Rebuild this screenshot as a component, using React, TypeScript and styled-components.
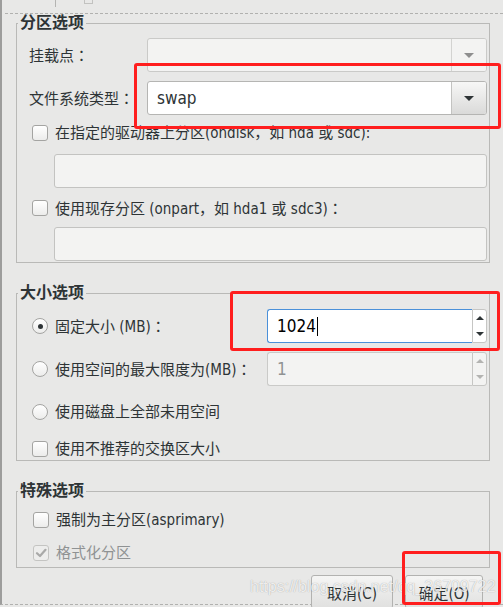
import React from "react";
import styled, { createGlobalStyle } from "styled-components";

const GlobalStyle = createGlobalStyle`
    body {
        margin: 0;
        background: #e8e8e7;
        font-family: "Liberation Sans Narrow", "DejaVu Sans Condensed", "Liberation Sans", "Noto Sans CJK SC", sans-serif;
        color: #2e3436;
    }
`;

const Page = styled.div`
    position: relative;
    width: 503px;
    height: 607px;
    overflow: hidden;
    background: #e8e8e7;
`;

const Frame = styled.div`
    height: 605px;
    box-sizing: border-box;
    border-left: 2px solid #9d9d9c;
    border-bottom: 1px dashed #b1b1af;
`;

const TopStrip = styled.div`
    display: flex;
    height: 13px;
    margin-left: 3px;
    border-bottom: 1px dashed #b1b1af;
`;

const TopTick = styled.div`
    width: 1px;
    height: 7px;
    margin-left: 50px;
    background: #b4b4b2;
`;

const TopMark = styled.div`
    width: 7px;
    height: 3px;
    margin-left: 28px;
    border: 1px solid #c2c2c0;
    border-top: none;
`;

const Group = styled.fieldset<{ $top: number; $bottom: number }>`
    display: block;
    width: 474px;
    box-sizing: border-box;
    margin: ${(p) => p.$top}px 0 0 14px;
    padding: 0 1px ${(p) => p.$bottom}px 1px;
    border: 1px solid #b9b9b7;
    min-inline-size: auto;
`;

const Legend = styled.legend`
    padding: 0 2px;
    font-size: 16px;
    line-height: 18px;
    font-weight: bold;
    color: #2e3436;
`;

const Body = styled.div`
    display: flex;
    flex-direction: column;
    padding: 0 1px 0 11px;
`;

const FormRow = styled.div<{ $label: number; $top: number }>`
    display: grid;
    grid-template-columns: ${(p) => p.$label}px 1fr;
    align-items: center;
    height: 34px;
    margin-top: ${(p) => p.$top}px;
`;

const OptionRow = styled.div<{ $top: number; $indent?: number }>`
    display: flex;
    align-items: center;
    gap: 7px;
    height: 22px;
    margin-top: ${(p) => p.$top}px;
    padding-left: ${(p) => p.$indent ?? 3}px;
`;

const Label = styled.span<{ $disabled?: boolean }>`
    font-size: 15px;
    line-height: 18px;
    white-space: nowrap;
    color: ${(p) => (p.$disabled ? "#8f9293" : "#2e3436")};
`;

// full-width colon drawn centred in its em box, as in the screenshot
const Colon = styled.span`
    font-family: "Noto Sans CJK JP", "Noto Sans CJK TC", sans-serif;
`;

const CheckBox = styled.span<{ $disabled?: boolean }>`
    display: flex;
    align-items: center;
    justify-content: center;
    width: 14px;
    height: 14px;
    flex: none;
    border: 1px solid ${(p) => (p.$disabled ? "#c4c4c2" : "#a4a4a2")};
    border-radius: 3px;
    background: ${(p) => (p.$disabled ? "#ededec" : "linear-gradient(#ffffff, #ececeb)")};
`;

const Radio = styled.span<{ $checked?: boolean }>`
    display: flex;
    align-items: center;
    justify-content: center;
    width: 14px;
    height: 14px;
    flex: none;
    border: 1px solid #a4a4a2;
    border-radius: 50%;
    background: linear-gradient(#ffffff, #ececeb);

    &::after {
        content: "";
        display: ${(p) => (p.$checked ? "block" : "none")};
        width: 5px;
        height: 5px;
        border-radius: 50%;
        background: #2e3436;
    }
`;

const Combo = styled.div<{ $disabled?: boolean }>`
    display: flex;
    height: 34px;
    box-sizing: border-box;
    border: 1px solid ${(p) => (p.$disabled ? "#cacac8" : "#b5b5b3")};
    border-radius: 3px;
    background: ${(p) => (p.$disabled ? "#f3f3f2" : "#ffffff")};
    overflow: hidden;
`;

const ComboText = styled.div`
    flex: 1;
    padding-left: 9px;
    font-size: 17px;
    line-height: 32px;
`;

const ComboButton = styled.div<{ $disabled?: boolean }>`
    display: flex;
    align-items: center;
    justify-content: center;
    width: 34px;
    border-left: 1px solid ${(p) => (p.$disabled ? "#d3d3d1" : "#c3c3c1")};
    background: ${(p) => (p.$disabled ? "#f3f3f2" : "linear-gradient(#f7f7f6, #dadad9)")};
`;

const Arrow = styled.span<{ $up?: boolean; $color: string; $size: number }>`
    width: 0;
    height: 0;
    border-left: ${(p) => p.$size}px solid transparent;
    border-right: ${(p) => p.$size}px solid transparent;
    ${(p) =>
        p.$up
            ? `border-bottom: ${Math.round(p.$size * 0.9)}px solid ${p.$color};`
            : `border-top: ${Math.round(p.$size * 0.9)}px solid ${p.$color};`}
`;

const Entry = styled.div<{ $top: number }>`
    height: 34px;
    margin: ${(p) => p.$top}px 0 0 25px;
    box-sizing: border-box;
    border: 1px solid #c3c3c1;
    border-radius: 3px;
    background: #f3f3f2;
`;

const Spin = styled.div`
    display: flex;
    height: 34px;
`;

const SpinField = styled.div<{ $focused?: boolean }>`
    display: flex;
    align-items: center;
    flex: 1;
    box-sizing: border-box;
    padding-left: 9px;
    border: 1px solid ${(p) => (p.$focused ? "#4a90d9" : "#cacac8")};
    border-right: none;
    border-radius: 3px 0 0 3px;
    background: ${(p) => (p.$focused ? "#ffffff" : "#f3f3f2")};
    font-size: 17px;
    color: ${(p) => (p.$focused ? "#000000" : "#8f9293")};
`;

const Caret = styled.span`
    width: 1px;
    height: 19px;
    margin-left: 1px;
    background: #000000;
`;

const SpinButtons = styled.div<{ $disabled?: boolean }>`
    display: flex;
    flex-direction: column;
    width: 15px;
    box-sizing: border-box;
    border: 1px solid #c6c6c4;
    border-radius: 0 3px 3px 0;
    background: ${(p) => (p.$disabled ? "#f3f3f2" : "#ffffff")};
`;

const SpinHalf = styled.div`
    display: flex;
    flex: 1;
    align-items: center;
    justify-content: center;
`;

const ButtonBar = styled.div`
    display: flex;
    justify-content: flex-end;
    gap: 12px;
    margin-top: 7px;
    padding-right: 20px;
`;

const DialogButton = styled.button<{ $width: number }>`
    width: ${(p) => p.$width}px;
    height: 34px;
    padding: 0;
    border: 1px solid #b2b2b0;
    border-radius: 3px;
    background: linear-gradient(#f5f5f4, #e0e0df);
    font-family: inherit;
    font-size: 15px;
    color: #2e3436;
`;

const Watermark = styled.div`
    position: absolute;
    left: 250px;
    top: 578px;
    font-family: "Liberation Sans", sans-serif;
    font-size: 16px;
    color: rgba(255, 255, 255, 0.82);
    text-shadow: 0 0 1px rgba(0, 0, 0, 0.35);
    white-space: nowrap;
    pointer-events: none;
`;

const Highlight = styled.div`
    position: absolute;
    box-sizing: border-box;
    border: 3px solid #ff1e1e;
    border-radius: 3px;
    pointer-events: none;
`;

const CheckMark: React.FC = () => (
    <svg width="12" height="12" viewBox="0 0 12 12">
        <path d="M2 6.2 L5 9 L10.5 2.8" fill="none" stroke="#a9a9a8" strokeWidth="2.2" strokeLinecap="round" strokeLinejoin="round" />
    </svg>
);

const marks = [
    { x: 134, y: 63, w: 367, h: 66 },
    { x: 230, y: 291, w: 270, h: 60 },
    { x: 402, y: 551, w: 99, h: 54 },
];

const App: React.FC = () => {
    return (
        <Page>
            <GlobalStyle />
            <Frame>
                <TopStrip>
                    <TopTick />
                    <TopMark />
                </TopStrip>

                <Group $top={0} $bottom={1}>
                    <Legend>分区选项</Legend>
                    <Body>
                        <FormRow $label={118} $top={6}>
                            <Label>挂载点<Colon>：</Colon></Label>
                            <Combo $disabled>
                                <ComboText />
                                <ComboButton $disabled>
                                    <Arrow $color="#8e8e8e" $size={5} />
                                </ComboButton>
                            </Combo>
                        </FormRow>
                        <FormRow $label={118} $top={9}>
                            <Label>文件系统类型<Colon>：</Colon></Label>
                            <Combo>
                                <ComboText>swap</ComboText>
                                <ComboButton>
                                    <Arrow $color="#2e3436" $size={5} />
                                </ComboButton>
                            </Combo>
                        </FormRow>
                        <OptionRow $top={7}>
                            <CheckBox />
                            <Label>在指定的驱动器上分区(ondisk，如 hda 或 sdc):</Label>
                        </OptionRow>
                        <Entry $top={10} />
                        <OptionRow $top={9}>
                            <CheckBox />
                            <Label>使用现存分区 (onpart，如 hda1 或 sdc3)<Colon>：</Colon></Label>
                        </OptionRow>
                        <Entry $top={8} />
                    </Body>
                </Group>

                <Group $top={21} $bottom={0}>
                    <Legend>大小选项</Legend>
                    <Body>
                        <FormRow $label={238} $top={7}>
                            <OptionRow $top={0}>
                                <Radio $checked />
                                <Label>固定大小 (MB)<Colon>：</Colon></Label>
                            </OptionRow>
                            <Spin>
                                <SpinField $focused>
                                    1024
                                    <Caret />
                                </SpinField>
                                <SpinButtons>
                                    <SpinHalf>
                                        <Arrow $up $color="#2e3436" $size={4} />
                                    </SpinHalf>
                                    <SpinHalf>
                                        <Arrow $color="#2e3436" $size={4} />
                                    </SpinHalf>
                                </SpinButtons>
                            </Spin>
                        </FormRow>
                        <FormRow $label={238} $top={9}>
                            <OptionRow $top={0}>
                                <Radio />
                                <Label>使用空间的最大限度为(MB)<Colon>：</Colon></Label>
                            </OptionRow>
                            <Spin>
                                <SpinField>1</SpinField>
                                <SpinButtons $disabled>
                                    <SpinHalf>
                                        <Arrow $up $color="#b3b3b1" $size={4} />
                                    </SpinHalf>
                                    <SpinHalf>
                                        <Arrow $color="#b3b3b1" $size={4} />
                                    </SpinHalf>
                                </SpinButtons>
                            </Spin>
                        </FormRow>
                        <OptionRow $top={15}>
                            <Radio />
                            <Label>使用磁盘上全部未用空间</Label>
                        </OptionRow>
                        <OptionRow $top={15}>
                            <CheckBox />
                            <Label>使用不推荐的交换区大小</Label>
                        </OptionRow>
                    </Body>
                </Group>

                <Group $top={21} $bottom={3}>
                    <Legend>特殊选项</Legend>
                    <Body>
                        <OptionRow $top={9} $indent={4}>
                            <CheckBox />
                            <Label>强制为主分区(asprimary)</Label>
                        </OptionRow>
                        <OptionRow $top={11} $indent={4}>
                            <CheckBox $disabled>
                                <CheckMark />
                            </CheckBox>
                            <Label $disabled>格式化分区</Label>
                        </OptionRow>
                    </Body>
                </Group>

                <ButtonBar>
                    <DialogButton $width={82}>取消(C)</DialogButton>
                    <DialogButton $width={78}>确定(O)</DialogButton>
                </ButtonBar>
            </Frame>

            <Watermark>https://blog.csdn.net/qq_36709722</Watermark>
            {marks.map((m, i) => (
                <Highlight key={i} style={{ left: m.x, top: m.y, width: m.w, height: m.h }} />
            ))}
        </Page>
    );
};

export default App;
